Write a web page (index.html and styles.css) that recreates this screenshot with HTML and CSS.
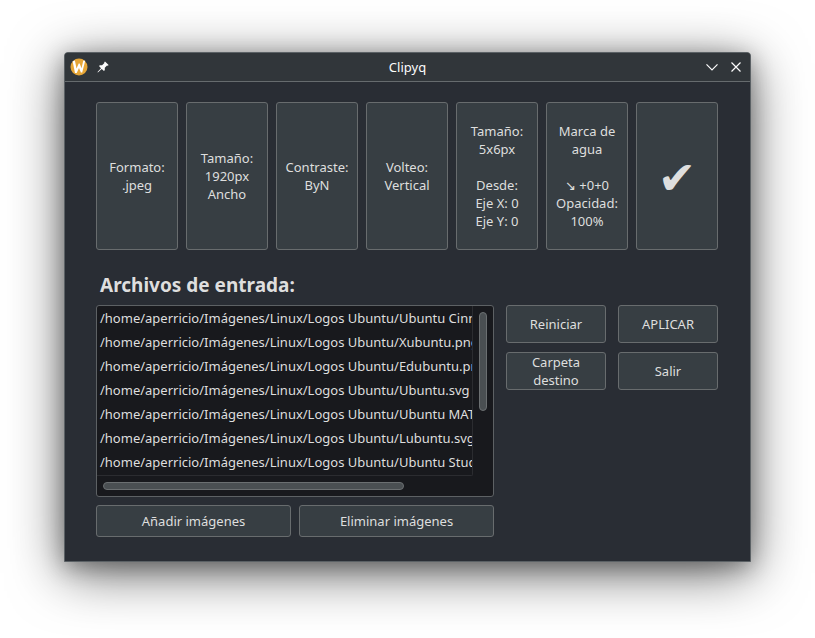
FILE: index.html
```html
<!DOCTYPE html>
<html lang="es">
<head>
<meta charset="utf-8">
<title>Clipyq</title>
<link rel="stylesheet" href="styles.css">
</head>
<body>
<main class="window">
  <header class="titlebar">
    <div class="titlebar-side">
      <svg class="app-icon" viewBox="0 0 18 18" width="18" height="18">
        <circle cx="9" cy="9" r="8.5" fill="#e6a637"/>
        <path d="M2.6 3.2 L4.9 2.6 L6.5 10.5 L8.7 5.6 L9.7 5.6 L11.5 10.3 L13.3 2.4 L15.2 2.7 L12.2 14.5 L10.9 14.5 L9 10 L6.7 15 L5 15 Z" fill="#fff"/>
      </svg>
      <svg class="pin-icon" viewBox="0 0 12 12" width="12" height="12">
        <path d="M8 .4 L11.6 4 L10.9 4.8 L10 4.6 L7.8 6.8 L7.8 9 L7 9.9 L4.7 7.9 L.9 11.5 L.5 11.1 L4 7.2 L2 5 L2.9 4.2 L5.1 4.2 L7.4 1.9 L7.2 1.2 Z" fill="#fcfcfc"/>
      </svg>
    </div>
    <h1 class="title">Clipyq</h1>
    <div class="titlebar-side titlebar-end">
      <svg viewBox="0 0 12 12" width="12" height="12"><path d="M.5 3.3 L6 8.8 L11.5 3.3" class="stroke"/></svg>
      <svg viewBox="0 0 12 12" width="12" height="12"><path d="M1.5 1.5 L10.5 10.5 M10.5 1.5 L1.5 10.5" class="stroke"/></svg>
    </div>
  </header>
  <div class="content">
    <section class="options">
      <button class="btn">Formato:<br>.jpeg</button>
      <button class="btn">Tamaño:<br>1920px<br>Ancho</button>
      <button class="btn">Contraste:<br>ByN</button>
      <button class="btn">Volteo:<br>Vertical</button>
      <button class="btn">Tamaño:<br>5x6px<br><br>Desde:<br>Eje X: 0<br>Eje Y: 0</button>
      <button class="btn">Marca de<br>agua<br><br><span class="arrow">↘</span> +0+0<br>Opacidad:<br>100%</button>
      <button class="btn check">✔</button>
    </section>
    <h2 class="heading">Archivos de entrada:</h2>
    <div class="lower">
      <div class="files">
        <div class="list">
          <ul class="rows">
            <li>/home/aperricio/Imágenes/Linux/Logos Ubuntu/Ubuntu Cinn</li>
            <li>/home/aperricio/Imágenes/Linux/Logos Ubuntu/Xubuntu.png</li>
            <li>/home/aperricio/Imágenes/Linux/Logos Ubuntu/Edubuntu.png</li>
            <li>/home/aperricio/Imágenes/Linux/Logos Ubuntu/Ubuntu.svg</li>
            <li>/home/aperricio/Imágenes/Linux/Logos Ubuntu/Ubuntu MATE</li>
            <li>/home/aperricio/Imágenes/Linux/Logos Ubuntu/Lubuntu.svg</li>
            <li>/home/aperricio/Imágenes/Linux/Logos Ubuntu/Ubuntu Stud</li>
          </ul>
          <div class="vbar"><div class="thumb"></div></div>
          <div class="hbar"><div class="thumb"></div></div>
        </div>
        <div class="file-actions">
          <button class="btn">Añadir imágenes</button>
          <button class="btn">Eliminar imágenes</button>
        </div>
      </div>
      <div class="actions">
        <button class="btn">Reiniciar</button>
        <button class="btn">APLICAR</button>
        <button class="btn">Carpeta destino</button>
        <button class="btn">Salir</button>
      </div>
    </div>
  </div>
</main>
</body>
</html>
```
FILE: styles.css
```css
* { box-sizing: border-box; }

body {
  margin: 0;
  padding: 52px 64px;
  height: 638px;
  overflow: hidden;
  background: #fff;
  color: #dedede;
  font: 13px/18px "Noto Sans", sans-serif;
}

.window {
  width: 687px;
  height: 510px;
  border: 1px solid #5b6165;
  border-radius: 4px 4px 0 0;
  background: #292d34;
  box-shadow: 0 11px 54px rgba(0, 0, 0, .6), 0 5px 22px rgba(0, 0, 0, .3);
}

.titlebar {
  display: flex;
  align-items: center;
  height: 29px;
  padding: 0 8px 0 5px;
  border-bottom: 1px solid #666b6e;
  border-radius: 3px 3px 0 0;
  background: #31363a;
}

.titlebar-side { display: flex; align-items: center; gap: 9px; width: 60px; }
.titlebar-end { justify-content: flex-end; gap: 12px; }

.title {
  flex: 1;
  margin: 0;
  padding-left: 3px;
  color: #fcfcfc;
  font-size: 13px;
  font-weight: 400;
  text-align: center;
}

.stroke { fill: none; stroke: #fcfcfc; stroke-width: 1.2; }

.content { padding: 20px 32px 0 31px; }

.options { display: grid; grid-template-columns: repeat(7, 82px); gap: 8px; height: 148px; }

.btn {
  margin: 0;
  padding: 0;
  border: 1px solid #686c6e;
  border-radius: 3px;
  background: #373e43;
  color: inherit;
  font: inherit;
}

.check { padding-top: 3px; font-family: "DejaVu Sans", sans-serif; font-size: 46px; line-height: 50px; }
.arrow { font-family: "DejaVu Sans", sans-serif; line-height: 1; }

.heading {
  margin: 21px 0 6px 4px;
  font-size: 19px;
  font-weight: 700;
  line-height: 28px;
}

.lower { display: flex; align-items: flex-start; gap: 12px; }

.files { width: 398px; }

.list {
  display: grid;
  grid-template: 170px 20px / 376px 20px;
  height: 192px;
  border: 1px solid #5d6164;
  border-radius: 3px;
  background: #18191d;
}

.rows {
  margin: 0;
  padding: 0 0 0 3px;
  overflow: hidden;
  border: solid #2b2c30;
  border-width: 0 1px 1px 0;
  border-radius: 0 0 2px 0;
  line-height: 24px;
  list-style: none;
  white-space: nowrap;
}

.thumb {
  border: 1px solid #6b6f71;
  border-radius: 4px;
  background: #4a4f52;
}

.vbar { padding: 6px 0 0 6px; }
.vbar .thumb { width: 8px; height: 99px; }
.hbar { padding: 6px 0 0 6px; }
.hbar .thumb { width: 301px; height: 8px; }

.file-actions { display: grid; grid-template-columns: 1fr 1fr; gap: 8px; height: 32px; margin-top: 8px; }

.actions { display: grid; grid-template: 38px 38px / 100px 100px; gap: 9px 12px; }
.actions .btn { padding: 0 18px; }
```
